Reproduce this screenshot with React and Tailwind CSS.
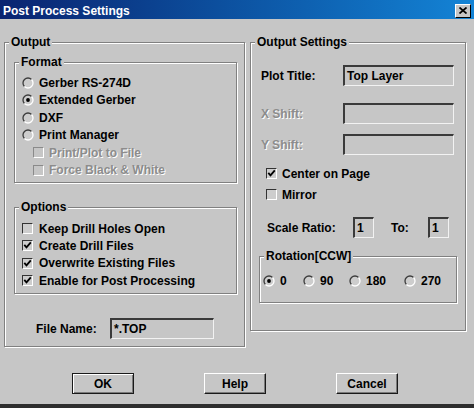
import React from "react";

const BG = "bg-[#c6c6c6]";

function Group({ label, className, children }) {
  return (
    <div
      className={
        "relative border border-[#808080] shadow-[inset_1px_1px_0_#fff,1px_1px_0_#fff] " +
        className
      }
    >
      <span className="absolute -top-[8px] left-[4px] px-[2px] bg-[#c6c6c6] leading-[14px] whitespace-nowrap">
        {label}
      </span>
      {children}
    </div>
  );
}

function Radio({ checked }) {
  return (
    <svg width="12" height="12" viewBox="0 0 12 12" className="shrink-0">
      <circle cx="6" cy="6" r="5" fill="#cdcdcd" />
      <path d="M9.54 2.46A5 5 0 0 0 2.46 9.54" fill="none" stroke="#3c3c3c" strokeWidth="1.3" />
      <path d="M2.46 9.54A5 5 0 0 0 9.54 2.46" fill="none" stroke="#ffffff" strokeWidth="1.3" />
      {checked && <circle cx="6" cy="6" r="1.9" fill="#000" />}
    </svg>
  );
}

function Check({ checked, disabled }) {
  return (
    <span
      className={
        disabled
          ? "w-[11px] h-[11px] shrink-0 border border-t-[#8a8a8a] border-l-[#8a8a8a] border-r-white border-b-white flex items-center justify-center"
          : "w-[11px] h-[11px] shrink-0 border border-t-[#333] border-l-[#333] border-r-white border-b-white bg-[#cdcdcd] flex items-center justify-center"
      }
    >
      {checked && (
        <svg width="9" height="9" viewBox="0 0 9 9">
          <path d="M1.3 3.8 L3.5 6.4 L7.8 1.4" fill="none" stroke="#000" strokeWidth="1.8" />
        </svg>
      )}
    </span>
  );
}

function Input({ className, children }) {
  return (
    <div
      className={
        "h-[21px] shrink-0 border-2 border-t-[#3a3a3a] border-l-[#3a3a3a] border-r-[#f2f2f2] border-b-[#f2f2f2] border-r-[1px] border-b-[1px] bg-[#c6c6c6] flex items-center pl-[2px] leading-[14px] " +
        className
      }
    >
      {children}
    </div>
  );
}

function Button({ children, isDefault }) {
  return (
    <div
      className={
        isDefault
          ? "w-[62px] h-[21px] border border-[#1a1a1a] shadow-[inset_1px_1px_0_#fff,inset_-1px_-1px_0_#7a7a7a] flex items-center justify-center leading-[14px]"
          : "w-[62px] h-[21px] border border-t-white border-l-white border-r-[#1a1a1a] border-b-[#1a1a1a] shadow-[inset_-1px_-1px_0_#7a7a7a] flex items-center justify-center leading-[14px]"
      }
    >
      {children}
    </div>
  );
}

const dis = "text-[#8c8c8c] [text-shadow:1px_1px_0_#fff]";

export default function App() {
  return (
    <div
      className={`w-[474px] h-[408px] ${BG} flex flex-col text-[12px] font-bold text-black overflow-hidden`}
      style={{ fontFamily: '"Liberation Sans", Arial, sans-serif' }}
    >
      {/* Title bar */}
      <div className="h-[19px] shrink-0 bg-gradient-to-r from-[#0a2370] to-[#1484d6] flex items-center justify-between pl-[3px] pr-[3px] pt-[2px]">
        <span className="text-white leading-[14px]">Post Process Settings</span>
        <div className="w-[16px] h-[14px] bg-[#c6c6c6] border border-t-white border-l-white border-r-black border-b-black flex items-center justify-center">
          <svg width="8" height="7" viewBox="0 0 8 7">
            <path d="M0.5 0.5 L7.5 6.5 M7.5 0.5 L0.5 6.5" stroke="#000" strokeWidth="1.7" />
          </svg>
        </div>
      </div>

      {/* Body */}
      <div className="flex items-start pl-[4px] gap-[5px] mt-[23px]">
        {/* Output */}
        <Group label="Output" className="w-[241px] h-[305px] pt-[19px] pl-[9px]">
          <Group label="Format" className="w-[223px] h-[121px] pt-[11px]">
            {[
              ["Gerber RS-274D", false],
              ["Extended Gerber", true],
              ["DXF", false],
              ["Print Manager", false],
            ].map(([t, c]) => (
              <div key={t} className="h-[17.5px] flex items-center pl-[7px] gap-[5px]">
                <Radio checked={c} />
                <span className="leading-[14px]">{t}</span>
              </div>
            ))}
            {["Print/Plot to File", "Force Black & White"].map((t) => (
              <div key={t} className="h-[17.5px] flex items-center pl-[18px] gap-[5px]">
                <Check disabled />
                <span className={"leading-[14px] " + dis}>{t}</span>
              </div>
            ))}
          </Group>

          <Group label="Options" className="w-[223px] h-[87px] mt-[24px] pt-[12px]">
            {[
              ["Keep Drill Holes Open", false],
              ["Create Drill Files", true],
              ["Overwrite Existing Files", true],
              ["Enable for Post Processing", true],
            ].map(([t, c]) => (
              <div key={t} className="h-[17.33px] flex items-center pl-[7px] gap-[6px]">
                <Check checked={c} />
                <span className="leading-[14px]">{t}</span>
              </div>
            ))}
          </Group>

          <div className="flex items-center mt-[24px] ml-[22px]">
            <span className="w-[74px] leading-[14px]">File Name:</span>
            <Input className="w-[104px]">*.TOP</Input>
          </div>
        </Group>

        {/* Output Settings */}
        <Group label="Output Settings" className="w-[216px] h-[289px] pt-[22px]">
          <div className="flex items-center pl-[10px]">
            <span className="w-[82px] leading-[14px]">Plot Title:</span>
            <Input className="w-[111px]">Top Layer</Input>
          </div>
          <div className="flex items-center pl-[10px] mt-[17px]">
            <span className={"w-[82px] leading-[14px] " + dis}>X Shift:</span>
            <Input className="w-[111px]"></Input>
          </div>
          <div className="flex items-center pl-[10px] mt-[10px]">
            <span className={"w-[82px] leading-[14px] " + dis}>Y Shift:</span>
            <Input className="w-[111px]"></Input>
          </div>

          <div className="h-[17px] flex items-center pl-[15px] gap-[5px] mt-[10px]">
            <Check checked />
            <span className="leading-[14px]">Center on Page</span>
          </div>
          <div className="h-[17px] flex items-center pl-[15px] gap-[5px] mt-[4px]">
            <Check />
            <span className="leading-[14px]">Mirror</span>
          </div>

          <div className="flex items-center pl-[16px] mt-[14px]">
            <span className="w-[86px] leading-[14px]">Scale Ratio:</span>
            <Input className="w-[21px]">1</Input>
            <span className="w-[37px] ml-[17px] leading-[14px]">To:</span>
            <Input className="w-[21px]">1</Input>
          </div>

          <Group label="Rotation[CCW]" className="w-[198px] h-[47px] ml-[8px] mt-[18px] pt-[15px] pl-[3px]">
            <div className="flex h-[17px] items-center">
              {[
                ["0", true, "w-[40px]"],
                ["90", false, "w-[46px]"],
                ["180", false, "w-[55px]"],
                ["270", false, "w-[45px]"],
              ].map(([t, c, w]) => (
                <div key={t} className={"flex items-center gap-[5px] " + w}>
                  <Radio checked={c} />
                  <span className="leading-[14px]">{t}</span>
                </div>
              ))}
            </div>
          </Group>
        </Group>
      </div>

      {/* Buttons */}
      <div className="flex pl-[72px] gap-[70px] mt-[26px]">
        <Button isDefault>OK</Button>
        <Button>Help</Button>
        <Button>Cancel</Button>
      </div>

      <div className="flex-1" />
      <div className="h-[4px] shrink-0 bg-[#2e2e2e]" />
    </div>
  );
}
